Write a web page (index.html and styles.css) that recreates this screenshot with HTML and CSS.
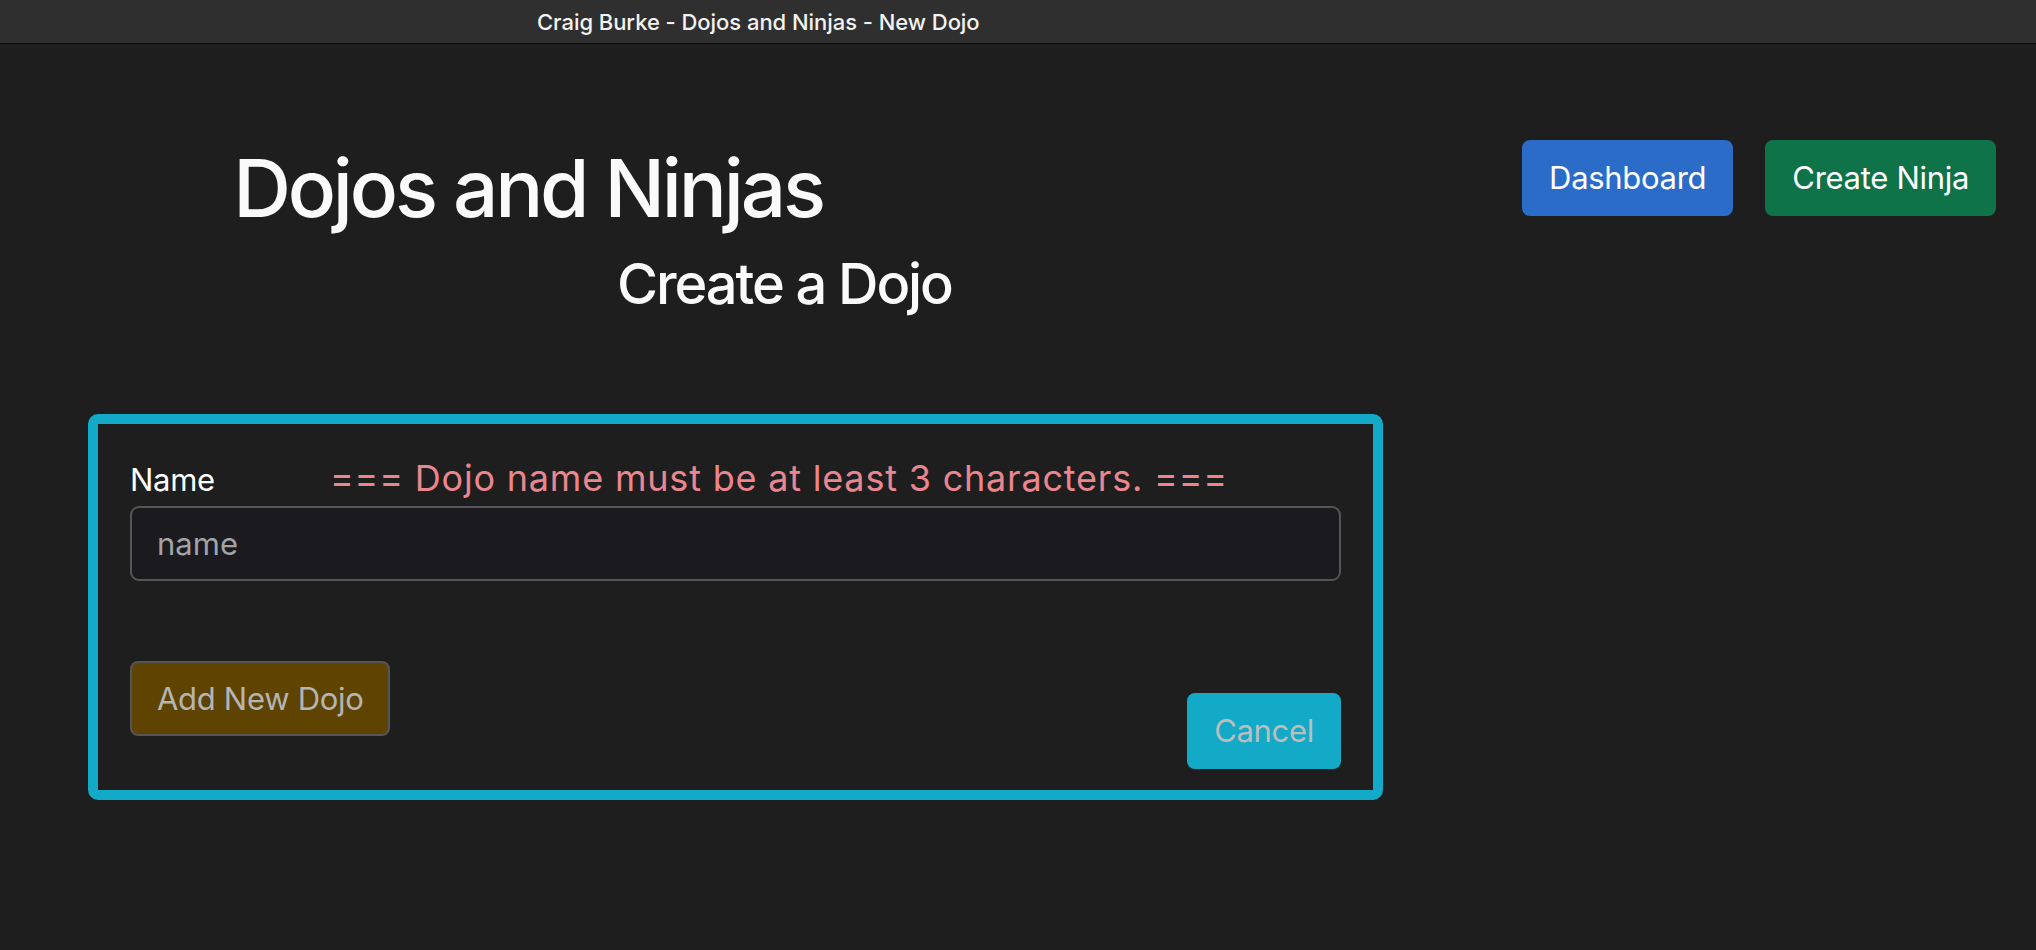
FILE: index.html
```html
<!DOCTYPE html>
<html lang="en">
<head>
<meta charset="utf-8">
<title>Craig Burke - Dojos and Ninjas - New Dojo</title>
<link rel="stylesheet" href="styles.css">
</head>
<body>
<div class="titlebar"><span class="titlebar-text">Craig Burke - Dojos and Ninjas - New Dojo</span></div>
<main class="page">
  <header class="header">
    <div class="heading-col">
      <h1 class="title">Dojos and Ninjas</h1>
      <h3 class="subtitle">Create a Dojo</h3>
    </div>
    <nav class="nav-buttons">
      <a class="btn btn-primary" href="#">Dashboard</a>
      <a class="btn btn-success" href="#">Create Ninja</a>
    </nav>
  </header>
  <form class="dojo-form">
    <div class="label-row">
      <label class="form-label" for="name">Name</label>
      <span class="error">=== Dojo name must be at least 3 characters. ===</span>
    </div>
    <input class="form-control" id="name" type="text" placeholder="name">
    <div class="form-actions">
      <button class="btn btn-add" type="button">Add New Dojo</button>
      <a class="btn btn-cancel" href="#">Cancel</a>
    </div>
  </form>
</main>
</body>
</html>
```
FILE: styles.css
```css
* { box-sizing: border-box; }
html, body { margin: 0; padding: 0; }
body {
  background: #1e1e1e;
  color: #f8f9fa;
  font-family: Inter, "Liberation Sans", sans-serif;
  width: 2036px;
  height: 950px;
  overflow: hidden;
}
.titlebar {
  height: 44px;
  background: #2f2f2f;
  border-bottom: 1px solid #0b0b0b;
  display: flex;
  align-items: center;
  padding-left: 537px;
}
.titlebar-text {
  font-size: 22px;
  font-weight: 500;
  color: #f2f2f2;
  letter-spacing: -0.05px;
}
.page {
  padding: 96px 40px 0 88px;
}
.header {
  display: flex;
  justify-content: space-between;
  align-items: flex-start;
}
.heading-col {
  width: 880px;
  display: flex;
  flex-direction: column;
  align-items: flex-start;
}
.title {
  align-self: stretch;
  margin: 0;
  font-size: 80px;
  line-height: 96px;
  font-weight: 500;
  text-align: center;
  letter-spacing: -3.2px;
  color: #fafafa;
}
.subtitle {
  margin: 15px 0 0 529px;
  white-space: nowrap;
  font-size: 56px;
  line-height: 67px;
  font-weight: 500;
  letter-spacing: -2.1px;
  color: #fafafa;
}
.nav-buttons {
  display: flex;
  gap: 32px;
}
.btn {
  display: inline-block;
  font-family: Inter, "Liberation Sans", sans-serif;
  font-size: 31px;
  line-height: 48px;
  padding: 12px 25px;
  border: 2px solid transparent;
  border-radius: 8px;
  text-decoration: none;
  color: #ffffff;
  cursor: pointer;
  letter-spacing: -0.3px;
}
.btn-primary { background: #2b6cc9; border-color: #2b6cc9; }
.btn-success { background: #0f7349; border-color: #0f7349; }
.dojo-form {
  margin-top: 96px;
  width: 1295px;
  border: 10px solid #12aac6;
  border-radius: 10px;
  padding: 34px 32px 21px 32px;
}
.label-row {
  display: flex;
  align-items: baseline;
  height: 41px;
  margin-bottom: 7px;
}
.form-label {
  font-size: 31px;
  color: #ffffff;
  line-height: 41px;
  width: 200px;
  letter-spacing: -0.3px;
}
.error {
  font-size: 36px;
  line-height: 41px;
  color: #ea868f;
  letter-spacing: 0.8px;
}
.form-control {
  display: block;
  width: 100%;
  height: 75px;
  background: #1b1b1f;
  border: 2px solid #555555;
  border-radius: 9px;
  padding: 0 25px;
  font-family: Inter, "Liberation Sans", sans-serif;
  font-size: 31px;
  color: #e0e0e0;
}
.form-control::placeholder { color: #a0a4a8; }
.form-actions {
  display: flex;
  justify-content: space-between;
  align-items: flex-start;
  margin-top: 80px;
}
.btn-add {
  background: #5e4400;
  border-color: #555555;
  color: #b5b5b5;
  height: 75px;
}
.btn-cancel {
  margin-top: 32px;
  background: #12aac6;
  border-color: #12aac6;
  color: #bdbdbd;
}
```
